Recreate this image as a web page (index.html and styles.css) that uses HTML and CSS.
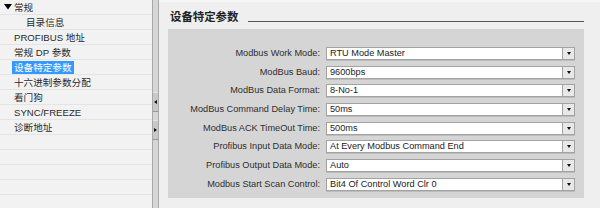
FILE: index.html
```html
<!DOCTYPE html>
<html>
<head>
<meta charset="utf-8">
<link rel="stylesheet" href="styles.css">
</head>
<body>
<div class="app">
  <div class="tree">
    <div class="row top"><svg class="caret" width="8" height="6" viewBox="0 0 8 6"><polygon points="0,0 8,0 4,5.5" fill="#000"/></svg><span class="txt">常规</span></div>
    <div class="row sub"><span class="txt">目录信息</span></div>
    <div class="row"><span class="txt">PROFIBUS 地址</span></div>
    <div class="row"><span class="txt">常规 DP 参数</span></div>
    <div class="row"><span class="txt sel">设备特定参数</span></div>
    <div class="row"><span class="txt">十六进制参数分配</span></div>
    <div class="row"><span class="txt">看门狗</span></div>
    <div class="row"><span class="txt">SYNC/FREEZE</span></div>
    <div class="row"><span class="txt">诊断地址</span></div>
    <div class="row"></div>
    <div class="row"></div>
    <div class="row"></div>
    <div class="row"></div>
    <div class="row"></div>
  </div>
  <div class="splitter">
    <div class="sbtn"><span class="tri-l"></span></div>
    <div class="sbtn"><span class="tri-r"></span></div>
  </div>
  <div class="main">
    <div class="head"><span class="title">设备特定参数</span><span class="rule"></span></div>
    <div class="box">
      <div class="grid">
        <div class="lbl">Modbus Work Mode:</div>
        <div class="combo"><span class="val">RTU Mode Master</span><span class="btn"><span class="tri-d"></span></span></div>
        <div class="lbl">ModBus Baud:</div>
        <div class="combo"><span class="val">9600bps</span><span class="btn"><span class="tri-d"></span></span></div>
        <div class="lbl">ModBus Data Format:</div>
        <div class="combo"><span class="val">8-No-1</span><span class="btn"><span class="tri-d"></span></span></div>
        <div class="lbl">ModBus Command Delay Time:</div>
        <div class="combo"><span class="val">50ms</span><span class="btn"><span class="tri-d"></span></span></div>
        <div class="lbl">ModBus ACK TimeOut Time:</div>
        <div class="combo"><span class="val">500ms</span><span class="btn"><span class="tri-d"></span></span></div>
        <div class="lbl">Profibus Input Data Mode:</div>
        <div class="combo"><span class="val">At Every Modbus Command End</span><span class="btn"><span class="tri-d"></span></span></div>
        <div class="lbl">Profibus Output Data Mode:</div>
        <div class="combo"><span class="val">Auto</span><span class="btn"><span class="tri-d"></span></span></div>
        <div class="lbl">Modbus Start Scan Control:</div>
        <div class="combo"><span class="val">Bit4 Of Control Word Clr 0</span><span class="btn"><span class="tri-d"></span></span></div>
      </div>
    </div>
  </div>
</div>
</body>
</html>
```
FILE: styles.css
```css
html, body {
  margin: 0;
  padding: 0;
}
body {
  width: 600px;
  height: 208px;
  overflow: hidden;
  background: #f0f0f0;
  font-family: "Liberation Sans", "Noto Sans CJK SC", sans-serif;
  color: #2a2a2a;
}
.app {
  display: flex;
  width: 600px;
  height: 208px;
}
.tree {
  width: 152px;
  flex: none;
  background: #f2f2f2;
  overflow: hidden;
}
.row {
  height: 14px;
  border-bottom: 1px solid #e4e4e4;
  display: flex;
  align-items: center;
  padding-left: 12px;
  font-size: 9.6px;
  line-height: 13px;
}
.row.top {
  padding-left: 4px;
}
.caret {
  flex: none;
  display: block;
  margin-right: 0;
}
.row.sub {
  padding-left: 24px;
}
.txt {
  padding: 0 2px;
  white-space: nowrap;
}
.txt.sel {
  background: #3399ff;
  color: #fff;
}
.splitter {
  width: 5px;
  flex: none;
  background: #d6d6d6;
  border-left: 1px solid #a8a8a8;
  border-right: 1px solid #a8a8a8;
  display: flex;
  flex-direction: column;
  padding-top: 92px;
  gap: 8px;
}
.sbtn {
  height: 18px;
  background: #c8c8c8;
  border-top: 1px solid #e6e6e6;
  border-bottom: 1px solid #9a9a9a;
  display: flex;
  align-items: center;
  justify-content: center;
}
.tri-l {
  width: 0;
  height: 0;
  border-top: 2.5px solid transparent;
  border-bottom: 2.5px solid transparent;
  border-right: 3px solid #111;
}
.tri-r {
  width: 0;
  height: 0;
  border-top: 2.5px solid transparent;
  border-bottom: 2.5px solid transparent;
  border-left: 3px solid #111;
}
.main {
  flex: 1;
  padding: 0 16px 0 9px;
  background: #efefef;
  border-top: 2px solid #f7f7f7;
}
.head {
  display: flex;
  align-items: flex-end;
  height: 20px;
  padding-left: 2px;
}
.title {
  font-family: "Noto Sans CJK SC", sans-serif;
  font-weight: bold;
  font-size: 11.4px;
  line-height: 14px;
  color: #222;
  margin-bottom: -1px;
}
.rule {
  flex: 1;
  height: 1px;
  background: #555;
  margin-left: 10px;
}
.box {
  margin-top: 7px;
  height: 151px;
  background: #d5d5d5;
  padding: 18px 9px 0 0;
}
.grid {
  display: grid;
  grid-template-columns: 152px 249px;
  column-gap: 6px;
  grid-auto-rows: 13px;
  row-gap: 5.7px;
}
.lbl {
  text-align: right;
  font-size: 9.2px;
  line-height: 13px;
  color: #2e2e2e;
  white-space: nowrap;
}
.combo {
  display: flex;
  background: #fff;
  border: 1px solid #a3a3a3;
  box-sizing: border-box;
  height: 13px;
  box-shadow: 0 1px 0 #bcbcbc;
}
.val {
  flex: 1;
  font-size: 9.2px;
  line-height: 11px;
  padding-left: 3px;
  color: #222;
  white-space: nowrap;
}
.btn {
  width: 11px;
  flex: none;
  background: #e8e8e8;
  border-left: 1px solid #a3a3a3;
  display: flex;
  align-items: center;
  justify-content: center;
}
.tri-d {
  width: 0;
  height: 0;
  border-left: 2.5px solid transparent;
  border-right: 2.5px solid transparent;
  border-top: 3px solid #111;
}
```
